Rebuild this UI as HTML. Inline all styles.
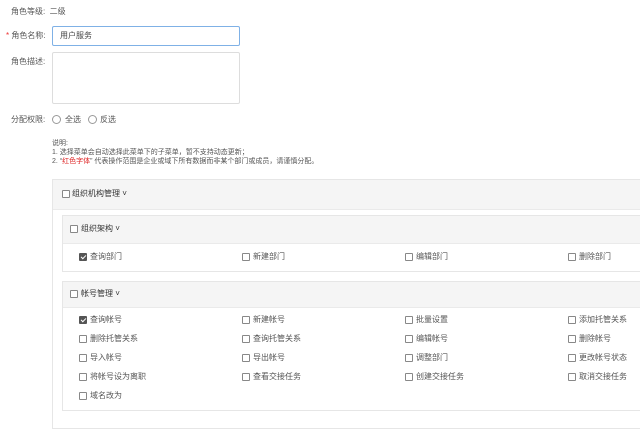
<!DOCTYPE html>
<html><head><meta charset="utf-8"><style>
*{margin:0;padding:0;box-sizing:border-box}
body{width:640px;height:416px;overflow:hidden;background:#fff;font-family:"Liberation Sans","Noto Sans CJK SC",sans-serif;font-size:8px;color:#555;position:relative}
.a{position:absolute;white-space:nowrap;line-height:10px}
.cb{position:absolute;width:8px;height:8px;border:1px solid #888;border-radius:1px;background:#fff}
.ck{background:#555;border-color:#555}
.ck:after{content:"";position:absolute;left:2px;top:0px;width:2px;height:4px;border:solid #fff;border-width:0 1px 1px 0;transform:rotate(45deg)}
.rd{position:absolute;width:9px;height:9px;border:1px solid #999;border-radius:50%}
.box{position:absolute;border:1px solid #e6e6e6;background:#fff}
.hd{position:absolute;left:0;right:0;top:0;background:#f5f5f5;border-bottom:1px solid #eaeaea}
.b{color:#333}
</style></head><body>
<div class="a" style="left:11px;top:7px">角色等级:&nbsp;&nbsp;二级</div>
<div class="a" style="left:6px;top:31px"><span style="color:#e33">*</span> 角色名称:</div>
<div style="position:absolute;left:52px;top:26px;width:188px;height:20px;border:1px solid #7fb1e6;border-radius:2px"></div>
<div class="a" style="left:60px;top:31px;color:#444">用户服务</div>
<div class="a" style="left:11px;top:57px">角色描述:</div>
<div style="position:absolute;left:52px;top:52px;width:188px;height:52px;border:1px solid #ddd;border-radius:2px"></div>
<div class="a" style="left:11px;top:115px">分配权限:</div>
<div class="rd" style="left:52px;top:115px"></div><div class="a" style="left:65px;top:115px">全选</div>
<div class="rd" style="left:88px;top:115px"></div><div class="a" style="left:100px;top:115px">反选</div>
<div class="a" style="left:52px;top:139px;font-size:7px;line-height:9px">说明:<br>1. 选择菜单会自动选择此菜单下的子菜单，暂不支持动态更新；<br>2. “<span style="color:#d22">红色字体</span>” 代表操作范围是企业或域下所有数据而非某个部门或成员，请谨慎分配。</div>

<div class="box" style="left:52px;top:179px;width:600px;height:250px">
 <div class="hd" style="height:30px"></div>
</div>
<div class="cb" style="left:62px;top:190px"></div><div class="a b" style="left:72px;top:189px">组织机构管理 ˅</div>

<div class="box" style="left:62px;top:215px;width:590px;height:57px"><div class="hd" style="height:28px"></div></div>
<div class="cb" style="left:70px;top:225px"></div><div class="a b" style="left:81px;top:224px">组织架构 ˅</div>
<div class="cb ck" style="left:79px;top:253px"></div><div class="a" style="left:90px;top:252px">查询部门</div>
<div class="cb" style="left:242px;top:253px"></div><div class="a" style="left:253px;top:252px">新建部门</div>
<div class="cb" style="left:405px;top:253px"></div><div class="a" style="left:416px;top:252px">编辑部门</div>
<div class="cb" style="left:568px;top:253px"></div><div class="a" style="left:579px;top:252px">删除部门</div>

<div class="box" style="left:62px;top:281px;width:590px;height:130px"><div class="hd" style="height:26px"></div></div>
<div class="cb" style="left:70px;top:290px"></div><div class="a b" style="left:81px;top:289px">帐号管理 ˅</div>

<div class="cb ck" style="left:79px;top:316px"></div><div class="a" style="left:90px;top:315px">查询帐号</div>
<div class="cb" style="left:242px;top:316px"></div><div class="a" style="left:253px;top:315px">新建帐号</div>
<div class="cb" style="left:405px;top:316px"></div><div class="a" style="left:416px;top:315px">批量设置</div>
<div class="cb" style="left:568px;top:316px"></div><div class="a" style="left:579px;top:315px">添加托管关系</div>

<div class="cb" style="left:79px;top:335px"></div><div class="a" style="left:90px;top:334px">删除托管关系</div>
<div class="cb" style="left:242px;top:335px"></div><div class="a" style="left:253px;top:334px">查询托管关系</div>
<div class="cb" style="left:405px;top:335px"></div><div class="a" style="left:416px;top:334px">编辑帐号</div>
<div class="cb" style="left:568px;top:335px"></div><div class="a" style="left:579px;top:334px">删除帐号</div>

<div class="cb" style="left:79px;top:354px"></div><div class="a" style="left:90px;top:353px">导入帐号</div>
<div class="cb" style="left:242px;top:354px"></div><div class="a" style="left:253px;top:353px">导出帐号</div>
<div class="cb" style="left:405px;top:354px"></div><div class="a" style="left:416px;top:353px">调整部门</div>
<div class="cb" style="left:568px;top:354px"></div><div class="a" style="left:579px;top:353px">更改帐号状态</div>

<div class="cb" style="left:79px;top:373px"></div><div class="a" style="left:90px;top:372px">将帐号设为离职</div>
<div class="cb" style="left:242px;top:373px"></div><div class="a" style="left:253px;top:372px">查看交接任务</div>
<div class="cb" style="left:405px;top:373px"></div><div class="a" style="left:416px;top:372px">创建交接任务</div>
<div class="cb" style="left:568px;top:373px"></div><div class="a" style="left:579px;top:372px">取消交接任务</div>

<div class="cb" style="left:79px;top:392px"></div><div class="a" style="left:90px;top:391px">域名改为</div>
</body></html>
